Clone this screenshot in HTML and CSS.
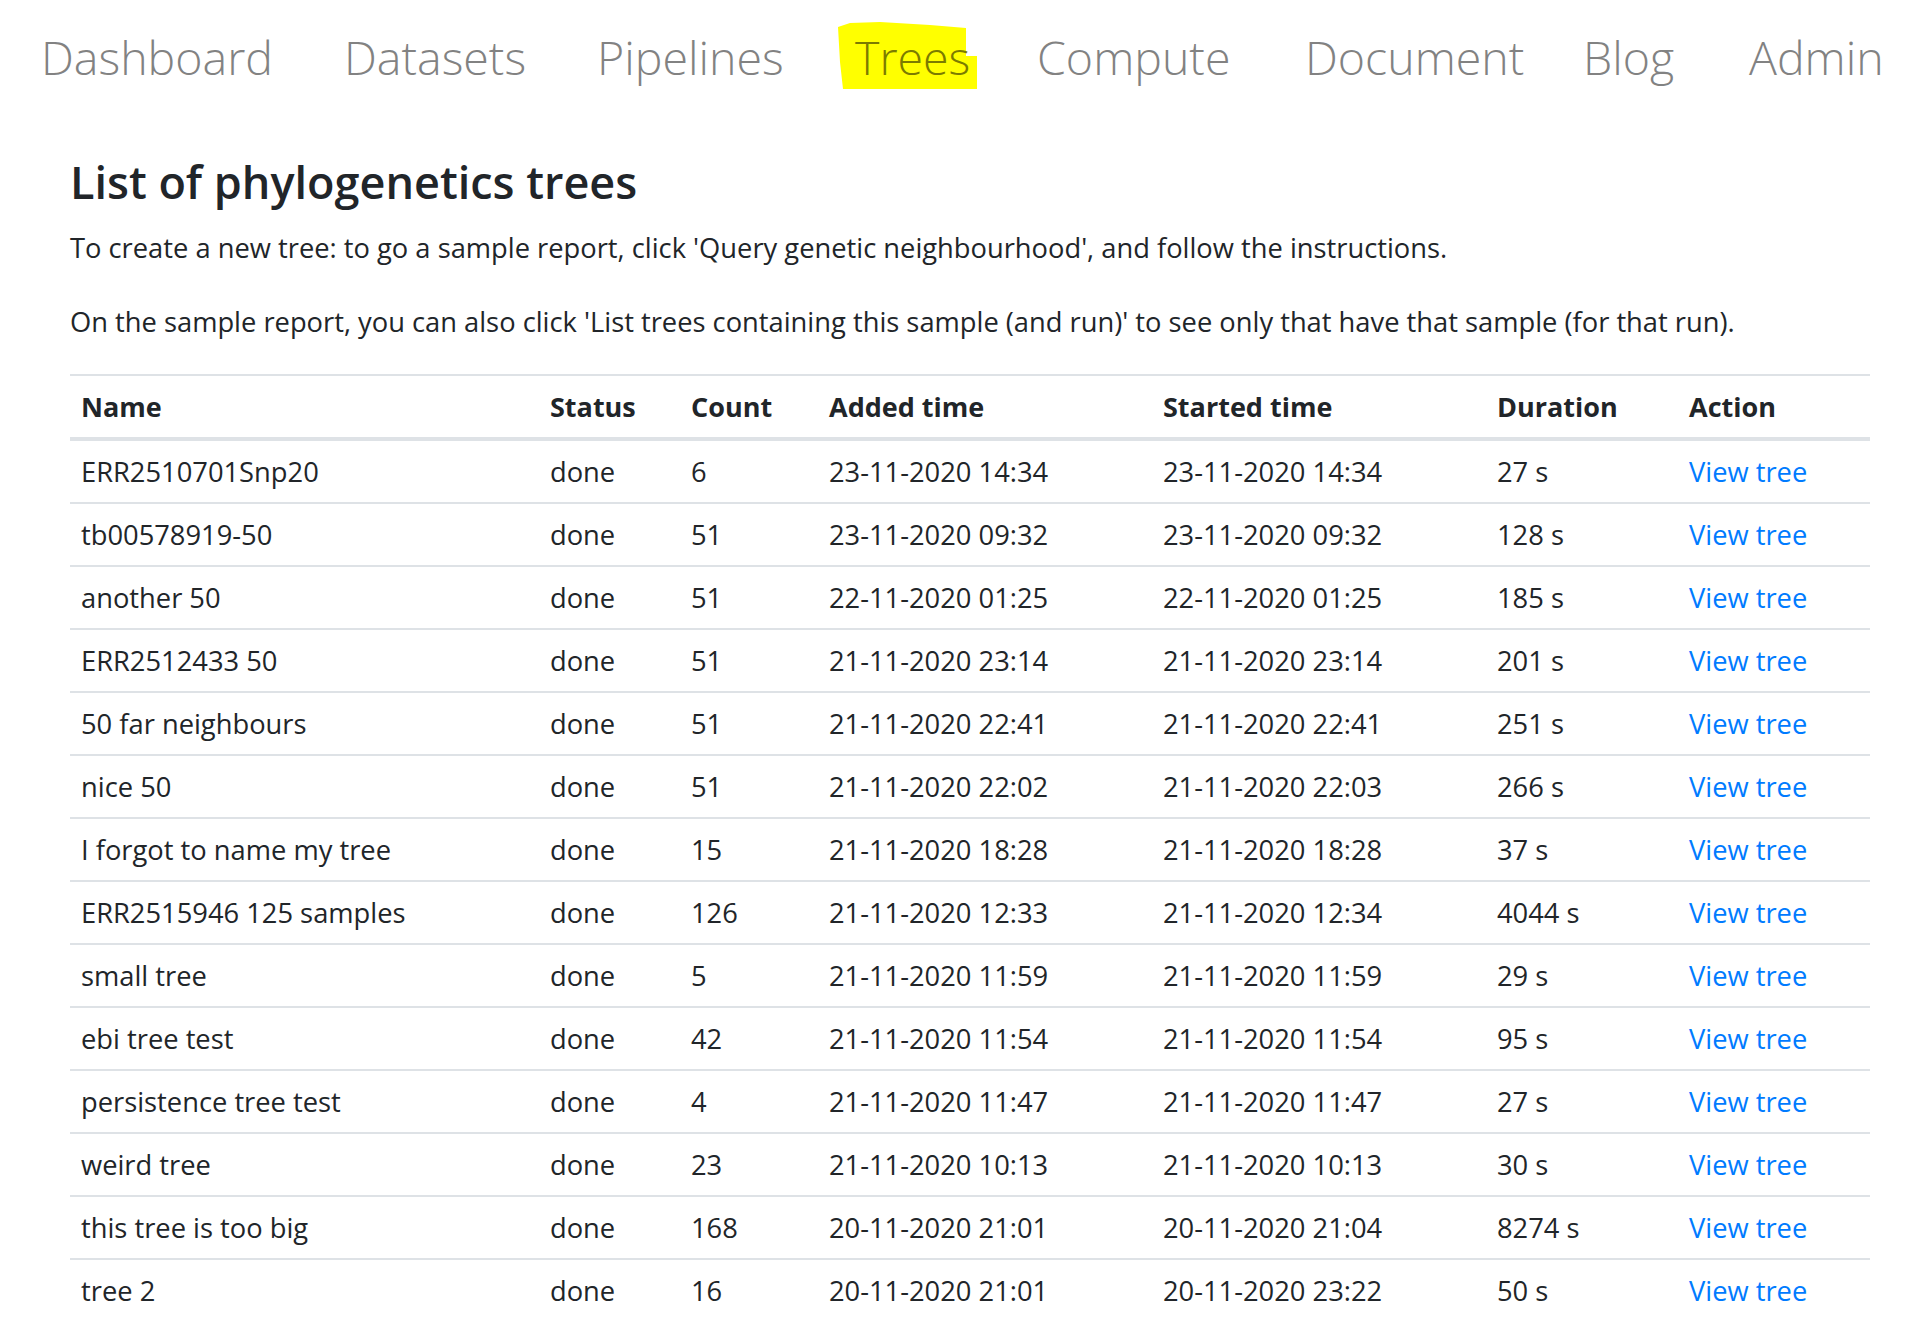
FILE: index.html
```html
<!DOCTYPE html>
<html lang="en">
<head>
<meta charset="utf-8">
<title>Trees</title>
<link rel="stylesheet" href="styles.css">
</head>
<body>
<nav class="topnav">
  <a class="nav-link" href="#">Dashboard</a>
  <a class="nav-link" href="#">Datasets</a>
  <a class="nav-link" href="#">Pipelines</a>
  <a class="nav-link active" href="#"><svg class="marker" width="140" height="68" viewBox="0 0 140 68" aria-hidden="true"><polygon points="0,5 12,1 42,0 92,3 128,6 128,34 139,34 139,67 5,67 2,40" fill="#ffff00"/></svg><span class="nav-text">Trees</span></a>
  <a class="nav-link" href="#">Compute</a>
  <a class="nav-link" href="#">Document</a>
  <a class="nav-link" href="#">Blog</a>
  <a class="nav-link" href="#">Admin</a>
</nav>
<main class="content">
  <h2 class="title">List of phylogenetics trees</h2>
  <p class="intro">To create a new tree: to go a sample report, click 'Query genetic neighbourhood', and follow the instructions.</p>
  <p class="intro second">On the sample report, you can also click 'List trees containing this sample (and run)' to see only that have that sample (for that run).</p>
  <table class="trees">
    <colgroup>
      <col class="c-name"><col class="c-status"><col class="c-count"><col class="c-added"><col class="c-started"><col class="c-duration"><col class="c-action">
    </colgroup>
    <thead>
      <tr><th>Name</th><th>Status</th><th>Count</th><th>Added time</th><th>Started time</th><th>Duration</th><th>Action</th></tr>
    </thead>
    <tbody>
      <tr><td>ERR2510701Snp20</td><td>done</td><td>6</td><td>23-11-2020 14:34</td><td>23-11-2020 14:34</td><td>27 s</td><td><a href="#">View tree</a></td></tr>
      <tr><td>tb00578919-50</td><td>done</td><td>51</td><td>23-11-2020 09:32</td><td>23-11-2020 09:32</td><td>128 s</td><td><a href="#">View tree</a></td></tr>
      <tr><td>another 50</td><td>done</td><td>51</td><td>22-11-2020 01:25</td><td>22-11-2020 01:25</td><td>185 s</td><td><a href="#">View tree</a></td></tr>
      <tr><td>ERR2512433 50</td><td>done</td><td>51</td><td>21-11-2020 23:14</td><td>21-11-2020 23:14</td><td>201 s</td><td><a href="#">View tree</a></td></tr>
      <tr><td>50 far neighbours</td><td>done</td><td>51</td><td>21-11-2020 22:41</td><td>21-11-2020 22:41</td><td>251 s</td><td><a href="#">View tree</a></td></tr>
      <tr><td>nice 50</td><td>done</td><td>51</td><td>21-11-2020 22:02</td><td>21-11-2020 22:03</td><td>266 s</td><td><a href="#">View tree</a></td></tr>
      <tr><td>I forgot to name my tree</td><td>done</td><td>15</td><td>21-11-2020 18:28</td><td>21-11-2020 18:28</td><td>37 s</td><td><a href="#">View tree</a></td></tr>
      <tr><td>ERR2515946 125 samples</td><td>done</td><td>126</td><td>21-11-2020 12:33</td><td>21-11-2020 12:34</td><td>4044 s</td><td><a href="#">View tree</a></td></tr>
      <tr><td>small tree</td><td>done</td><td>5</td><td>21-11-2020 11:59</td><td>21-11-2020 11:59</td><td>29 s</td><td><a href="#">View tree</a></td></tr>
      <tr><td>ebi tree test</td><td>done</td><td>42</td><td>21-11-2020 11:54</td><td>21-11-2020 11:54</td><td>95 s</td><td><a href="#">View tree</a></td></tr>
      <tr><td>persistence tree test</td><td>done</td><td>4</td><td>21-11-2020 11:47</td><td>21-11-2020 11:47</td><td>27 s</td><td><a href="#">View tree</a></td></tr>
      <tr><td>weird tree</td><td>done</td><td>23</td><td>21-11-2020 10:13</td><td>21-11-2020 10:13</td><td>30 s</td><td><a href="#">View tree</a></td></tr>
      <tr><td>this tree is too big</td><td>done</td><td>168</td><td>20-11-2020 21:01</td><td>20-11-2020 21:04</td><td>8274 s</td><td><a href="#">View tree</a></td></tr>
      <tr><td>tree 2</td><td>done</td><td>16</td><td>20-11-2020 21:01</td><td>20-11-2020 23:22</td><td>50 s</td><td><a href="#">View tree</a></td></tr>
    </tbody>
  </table>
</main>
</body>
</html>
```

FILE: styles.css
```css
html, body {
  margin: 0;
  padding: 0;
  background: #ffffff;
}

body {
  font-family: "Open Sans", "Noto Sans", "Liberation Sans", sans-serif;
  color: #212529;
  overflow: hidden;
}

.topnav {
  display: grid;
  grid-template-columns: 303px 253px 258px 182px 268px 278px 166px auto;
  padding: 25px 0 0 41px;
  height: 64px;
}

.nav-link {
  position: relative;
  font-size: 46.5px;
  font-weight: 300;
  line-height: 64px;
  color: #828282;
  text-decoration: none;
  white-space: nowrap;
}

.nav-link.active {
  color: #7b7b00;
}

.marker {
  position: absolute;
  left: -17px;
  top: -3px;
  z-index: 0;
}

.nav-text {
  position: relative;
  z-index: 1;
}

.content {
  padding: 0 45px 0 70px;
}

.title {
  margin: 65px 0 0 0;
  font-size: 45px;
  font-weight: 600;
  line-height: 55px;
  color: #212529;
}

.intro {
  margin: 18px 0 0 0;
  font-size: 27.3px;
  line-height: 41px;
}

.intro.second {
  margin-top: 33px;
}

.trees {
  margin-top: 32px;
  width: 1800px;
  border-collapse: collapse;
  table-layout: fixed;
  font-size: 27.3px;
  line-height: 41px;
}

.c-name { width: 469px; }
.c-status { width: 141px; }
.c-count { width: 138px; }
.c-added { width: 334px; }
.c-started { width: 334px; }
.c-duration { width: 192px; }
.c-action { width: 192px; }

.trees th,
.trees td {
  padding: 10px 10px 10px 11px;
  text-align: left;
  border-top: 2px solid #dee2e6;
  white-space: nowrap;
}

.trees th {
  font-weight: 700;
  font-size: 27px;
  border-bottom: 4px solid #dee2e6;
}

.trees a {
  color: #007bff;
  text-decoration: none;
}
```
